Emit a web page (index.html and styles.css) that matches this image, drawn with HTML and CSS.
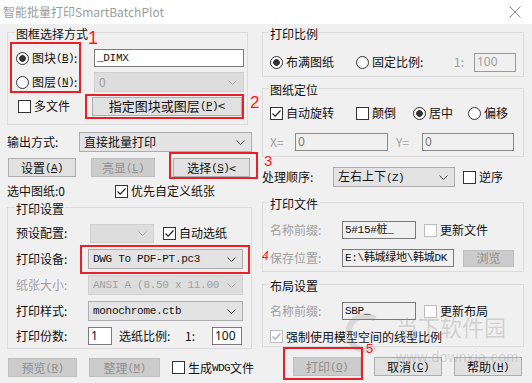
FILE: index.html
```html
<!DOCTYPE html>
<html lang="zh-CN">
<head>
<meta charset="utf-8">
<title>智能批量打印SmartBatchPlot</title>
<link rel="stylesheet" href="styles.css">
</head>
<body>
<div class="win">
  <div class="title">
    <span>智能批量打印SmartBatchPlot</span>
    <svg class="close" width="12" height="12" viewBox="0 0 12 12"><path d="M0.5 0.5L11.5 11.5M11.5 0.5L0.5 11.5" stroke="#8a8a8a" stroke-width="1" fill="none"/></svg>
  </div>
  <div class="body">
    <div class="col-l">
      <section class="grp g1">
        <div class="gh"><span>图框选择方式</span></div>
        <div class="gb">
          <div class="row h24">
            <span class="lbl w78"><span class="rb on"></span>图块<span class="k">(<u>B</u>)</span>:</span>
            <span class="edit mono w150">_DIMX</span>
          </div>
          <div class="row h24">
            <span class="lbl w78"><span class="rb"></span>图层<span class="k">(<u>N</u>)</span>:</span>
            <span class="sel dis w150"><span>0</span><svg class="chev" width="9" height="5" viewBox="0 0 9 5"><polyline points="0.5,0.5 4.5,4.5 8.5,0.5" fill="none" stroke="currentColor"/></svg></span>
          </div>
          <div class="row h24">
            <span class="lbl w74 ml2"><span class="cb"></span>多文件</span>
            <span class="btn w150 big">指定图块或图层<span class="k">(<u>P</u>)</span>&lt;</span>
          </div>
        </div>
      </section>

      <div class="row h20 mt7">
        <span class="lbl w72">输出方式:</span>
        <span class="sel w173"><span>直接批量打印</span><svg class="chev" width="9" height="5" viewBox="0 0 9 5"><polyline points="0.5,0.5 4.5,4.5 8.5,0.5" fill="none" stroke="currentColor"/></svg></span>
      </div>

      <div class="row h19 mt6">
        <span class="btn w68 ml1">设置<span class="k">(<u>A</u>)</span></span>
        <span class="btn dis w64 ml15">亮显<span class="k">(<u>L</u>)</span></span>
        <span class="btn w77 ml18">选择<span class="k">(<u>S</u>)</span>&lt;</span>
      </div>

      <div class="row h16 mt6">
        <span class="lbl w108">选中图纸:0</span>
        <span class="lbl"><span class="cb"><svg width="11" height="11" viewBox="0 0 11 11"><path d="M1.5 5.5L4.2 8.2L9.5 2.5" fill="none" stroke="#222" stroke-width="1.2"/></svg></span>优先自定义纸张</span>
      </div>

      <section class="grp g2">
        <div class="gh"><span>打印设置</span></div>
        <div class="gb">
          <div class="row h26">
            <span class="lbl w74">预设配置:</span>
            <span class="sel dis w64 h19"><span></span><svg class="chev" width="9" height="5" viewBox="0 0 9 5"><polyline points="0.5,0.5 4.5,4.5 8.5,0.5" fill="none" stroke="currentColor"/></svg></span>
            <span class="lbl ml9"><span class="cb"><svg width="11" height="11" viewBox="0 0 11 11"><path d="M1.5 5.5L4.2 8.2L9.5 2.5" fill="none" stroke="#222" stroke-width="1.2"/></svg></span>自动选纸</span>
          </div>
          <div class="row h26">
            <span class="lbl w72">打印设备:</span>
            <span class="sel mono w155"><span>DWG To PDF-PT.pc3</span><svg class="chev" width="9" height="5" viewBox="0 0 9 5"><polyline points="0.5,0.5 4.5,4.5 8.5,0.5" fill="none" stroke="currentColor"/></svg></span>
          </div>
          <div class="row h26">
            <span class="lbl w72 gray">纸张大小:</span>
            <span class="sel dis mono w155"><span class="clip">ANSI A (8.50 x 11.00 英</span><svg class="chev" width="9" height="5" viewBox="0 0 9 5"><polyline points="0.5,0.5 4.5,4.5 8.5,0.5" fill="none" stroke="currentColor"/></svg></span>
          </div>
          <div class="row h26">
            <span class="lbl w72">打印样式:</span>
            <span class="sel mono w155"><span>monochrome.ctb</span><svg class="chev" width="9" height="5" viewBox="0 0 9 5"><polyline points="0.5,0.5 4.5,4.5 8.5,0.5" fill="none" stroke="currentColor"/></svg></span>
          </div>
          <div class="row h24">
            <span class="lbl w72">打印份数:</span>
            <span class="edit w24">1</span>
            <span class="lbl w66 ml7">选纸比例:</span>
            <span class="lbl w27">1:</span>
            <span class="edit w30">100</span>
          </div>
        </div>
      </section>

      <div class="row h19 mt9">
        <span class="btn dis w69 ml1">预览<span class="k">(<u>R</u>)</span></span>
        <span class="btn dis w71 ml12">整理<span class="k">(<u>M</u>)</span></span>
        <span class="lbl ml12"><span class="cb"></span>生成<span class="k">WDG</span>文件</span>
      </div>
    </div>

    <div class="col-r">
      <section class="grp r1">
        <div class="gh"><span>打印比例</span></div>
        <div class="gb">
          <div class="row h24">
            <span class="lbl w86"><span class="rb on"></span>布满图纸</span>
            <span class="lbl w98"><span class="rb"></span>固定比例:</span>
            <span class="lbl w20 gray">1:</span>
            <span class="edit dis w42 h19">100</span>
          </div>
        </div>
      </section>

      <section class="grp r2">
        <div class="gh"><span>图纸定位</span></div>
        <div class="gb">
          <div class="row h24">
            <span class="lbl w86"><span class="cb"><svg width="11" height="11" viewBox="0 0 11 11"><path d="M1.5 5.5L4.2 8.2L9.5 2.5" fill="none" stroke="#222" stroke-width="1.2"/></svg></span>自动旋转</span>
            <span class="lbl w57"><span class="cb"></span>颠倒</span>
            <span class="lbl w55"><span class="rb on"></span>居中</span>
            <span class="lbl"><span class="rb"></span>偏移</span>
          </div>
          <div class="row h28 mt3">
            <span class="lbl w25 gray">X=</span>
            <span class="edit dis2 w93">0</span>
            <span class="lbl w26 ml8 gray">Y=</span>
            <span class="edit dis2 w92">0</span>
          </div>
        </div>
      </section>

      <div class="row h22 mt9">
        <span class="lbl w71">处理顺序:</span>
        <span class="sel w122"><span>左右上下<span class="k">(Z)</span></span><svg class="chev" width="9" height="5" viewBox="0 0 9 5"><polyline points="0.5,0.5 4.5,4.5 8.5,0.5" fill="none" stroke="currentColor"/></svg></span>
        <span class="lbl ml8"><span class="cb"></span>逆序</span>
      </div>

      <section class="grp r3">
        <div class="gh"><span>打印文件</span></div>
        <div class="gb">
          <div class="row h24">
            <span class="lbl w72 gray">名称前缀:</span>
            <span class="edit ro mono w74">5#15#桩_</span>
            <span class="lbl ml8"><span class="cb dis"></span>更新文件</span>
          </div>
          <div class="row h24 mt4">
            <span class="lbl w72 gray">保存位置:</span>
            <span class="edit ro mono w112">E:\韩城绿地\韩城DK</span>
            <span class="btn dis w51 h17 ml9">浏览</span>
          </div>
        </div>
      </section>

      <section class="grp r4">
        <div class="gh"><span>布局设置</span></div>
        <div class="gb">
          <div class="row h22">
            <span class="lbl w72 gray">名称前缀:</span>
            <span class="edit ro mono w74">SBP_</span>
            <span class="lbl ml8"><span class="cb dis"></span>更新布局</span>
          </div>
          <div class="row h19 mt5">
            <span class="lbl"><span class="cb dis"><svg width="11" height="11" viewBox="0 0 11 11"><path d="M1.5 5.5L4.2 8.2L9.5 2.5" fill="none" stroke="#a8a8a8" stroke-width="1.2"/></svg></span>强制使用模型空间的线型比例</span>
          </div>
        </div>
      </section>

      <div class="row h19 mt10">
        <span class="btn dis w68 ml31">打印<span class="k">(<u>O</u>)</span></span>
        <span class="btn w68 ml13">取消<span class="k">(<u>C</u>)</span></span>
        <span class="btn w68 ml12">帮助<span class="k">(<u>H</u>)</span></span>
      </div>
    </div>
  </div>

  <div class="wm wm1">当下软件园</div>
  <div class="wm wm2">www.downxia.com</div>
  <svg class="wm wmlogo" width="36" height="44" viewBox="0 0 36 44"><path d="M30 8A17 17 0 1 0 30 36" fill="none" stroke="rgba(130,130,130,0.22)" stroke-width="6"/></svg>

  <div class="mark b1"></div><span class="num n1">1</span>
  <div class="mark b2"></div><span class="num n2">2</span>
  <div class="mark b3"></div><span class="num n3">3</span>
  <div class="mark b4"></div><span class="num n4">4</span>
  <div class="mark b5"></div><span class="num n5">5</span>
</div>
</body>
</html>
```

FILE: styles.css
```css
* { box-sizing: border-box; }
html, body { margin: 0; padding: 0; }
body {
  width: 532px;
  height: 383px;
  overflow: hidden;
  background: #f0f0f0;
  font-family: "Noto Sans CJK SC", "Microsoft YaHei", sans-serif;
  font-size: 12px;
  line-height: 14px;
  color: #111;
}
.win { position: relative; width: 532px; height: 383px; }

.title {
  height: 24px;
  background: #fff;
  display: flex;
  align-items: center;
  justify-content: space-between;
  padding: 0 11px 0 3px;
  color: #9c9c9c;
  font-size: 12px;
}
.close { display: block; }

.body { display: flex; padding-left: 7px; gap: 10px; }
.col-l { width: 245px; display: flex; flex-direction: column; }
.col-r { width: 262px; display: flex; flex-direction: column; }

/* group box: header line with caption, then bordered body */
.grp { display: flex; flex-direction: column; flex: none; }
.gh { display: flex; align-items: flex-end; height: 13px; }
.gh::before {
  content: "";
  flex: none;
  width: 7px;
  height: 7px;
  border-top: 1px solid #dcdcdc;
  border-left: 1px solid #dcdcdc;
}
.gh span { line-height: 13px; padding: 0 1px; align-self: stretch; white-space: nowrap; color: #111; }
.gh::after {
  content: "";
  flex: 1;
  height: 7px;
  border-top: 1px solid #dcdcdc;
  border-right: 1px solid #dcdcdc;
}
.gb { border: 1px solid #dcdcdc; border-top: none; }

.g1 { width: 241px; margin-top: 3px; }
.g1 .gb { padding: 6px 0 6px 8px; }
.g1 .gh::before { width: 7px; }
.g2 { width: 245px; margin-top: 3px; }
.g2 .gb { padding: 5px 0 0 8px; }
.r1 { width: 262px; margin-top: 3px; }
.r1 .gb { padding: 10px 0 2px 7px; }
.r2 { width: 262px; margin-top: 6px; }
.r2 .gb { padding: 5px 0 0 7px; }
.r3 { width: 262px; margin-top: 9px; }
.r3 .gb { padding: 8px 0 1px 7px; }
.r4 { width: 262px; margin-top: 7px; }
.r4 .gb { padding: 8px 0 0 7px; }
.r1 .gh::before, .r2 .gh::before, .r3 .gh::before, .r4 .gh::before { width: 6px; }

.row { display: flex; align-items: center; flex: none; }
.h16 { height: 16px; } .h17 { height: 17px; } .h19 { height: 19px; } .h20 { height: 20px; }
.h22 { height: 22px; } .h24 { height: 24px; } .h26 { height: 26px; } .h28 { height: 28px; }
.mt3 { margin-top: 3px; } .mt4 { margin-top: 4px; } .mt5 { margin-top: 5px; } .mt6 { margin-top: 6px; }
.mt7 { margin-top: 7px; } .mt9 { margin-top: 9px; } .mt10 { margin-top: 10px; }
.ml1 { margin-left: 1px; } .ml2 { margin-left: 2px; } .ml7 { margin-left: 7px; } .ml8 { margin-left: 8px; }
.ml9 { margin-left: 9px; } .ml12 { margin-left: 12px; } .ml13 { margin-left: 13px; } .ml15 { margin-left: 15px; }
.ml18 { margin-left: 18px; } .ml31 { margin-left: 31px; }

.w20 { width: 20px; } .w24 { width: 24px; } .w25 { width: 25px; } .w26 { width: 26px; } .w27 { width: 27px; }
.w30 { width: 30px; } .w42 { width: 42px; } .w51 { width: 51px; } .w55 { width: 55px; } .w57 { width: 57px; }
.w64 { width: 64px; } .w66 { width: 66px; } .w68 { width: 68px; } .w69 { width: 69px; } .w71 { width: 71px; }
.w72 { width: 72px; } .w74 { width: 74px; } .w77 { width: 77px; } .w78 { width: 78px; } .w86 { width: 86px; }
.w92 { width: 92px; } .w93 { width: 93px; } .w98 { width: 98px; } .w108 { width: 108px; } .w112 { width: 112px; }
.w122 { width: 122px; } .w150 { width: 150px; } .w155 { width: 155px; } .w173 { width: 173px; }

.lbl { display: flex; align-items: center; flex: none; white-space: nowrap; }
.gray { color: #a0a0a0; }

.k {
  font-family: "Liberation Mono", monospace;
  font-size: 11px;
  letter-spacing: -0.6px;
}
.k u { text-underline-offset: 1px; }

.rb {
  width: 13px; height: 13px;
  border: 1px solid #333;
  border-radius: 50%;
  background: #fff;
  flex: none;
  margin-right: 3px;
}
.rb.on { background: radial-gradient(circle, #333 0 3px, #fff 3.7px); }
.cb {
  width: 13px; height: 13px;
  border: 1px solid #333;
  background: #fff;
  flex: none;
  margin-right: 3px;
  display: flex;
  align-items: center;
  justify-content: center;
}
.cb svg { display: block; }
.cb.dis { border-color: #bcbcbc; }

.edit {
  height: 18px;
  border: 1px solid #7a7a7a;
  background: #fff;
  padding: 0 2px;
  display: flex;
  align-items: center;
  flex: none;
  white-space: nowrap;
  overflow: hidden;
  font-family: "Noto Sans", "Noto Sans CJK SC", sans-serif;
  font-size: 12px;
}
.edit.h19 { height: 19px; }
.edit.ro { background: #f0f0f0; }
.edit.dis { background: #f0f0f0; border-color: #9a9a9a; color: #a0a0a0; }
.edit.dis2 { background: #f0f0f0; border-color: #8a8a8a; color: #7a7a7a; }
.mono {
  font-family: "Liberation Mono", "Noto Sans CJK SC", monospace;
  font-size: 11px;
  letter-spacing: -0.3px;
}

.sel {
  height: 20px;
  border: 1px solid #adadad;
  background: #e3e3e3;
  display: flex;
  align-items: center;
  justify-content: space-between;
  padding: 0 6px 0 4px;
  flex: none;
  white-space: nowrap;
  overflow: hidden;
  color: #111;
}
.sel.h19 { height: 19px; }
.sel.dis { background: #dddddd; border-color: #d0d0d0; color: #a0a0a0; }
.sel .chev { flex: none; color: #444; margin-left: 4px; }
.sel.dis .chev { color: #a8a8a8; }
.clip { overflow: hidden; }

.btn {
  height: 19px;
  border: 1px solid #adadad;
  background: #e1e1e1;
  display: flex;
  align-items: center;
  justify-content: center;
  flex: none;
  white-space: nowrap;
}
.btn.h17 { height: 17px; }
.btn.big { font-size: 13px; }
.btn.dis { background: #cccccc; border-color: #bfbfbf; color: #8f8f8f; }

.mark { position: absolute; border: 2px solid #e8202a; }
.b1 { left: 10px; top: 42px; width: 71px; height: 51px; }
.b2 { left: 85px; top: 94px; width: 159px; height: 25px; }
.b3 { left: 169px; top: 152px; width: 89px; height: 27px; }
.b4 { left: 80px; top: 245px; width: 170px; height: 29px; }
.b5 { left: 283px; top: 347px; width: 80px; height: 33px; }

.num {
  position: absolute;
  color: #ff1a1a;
  font-family: "Liberation Sans", sans-serif;
  line-height: 1;
}
.n1 { left: 88px; top: 29px; font-size: 18px; }
.n2 { left: 250px; top: 94px; font-size: 17px; }
.n3 { left: 264px; top: 153px; font-size: 15px; }
.n4 { left: 262px; top: 250px; font-size: 12px; font-style: italic; }
.n5 { left: 366px; top: 342px; font-size: 13px; }

.wm { position: absolute; color: rgba(140, 140, 140, 0.32); pointer-events: none; white-space: nowrap; }
.wm1 { left: 396px; top: 313px; font-size: 22px; line-height: 26px; letter-spacing: 0; }
.wm2 { left: 396px; top: 349px; font-size: 14px; line-height: 16px; font-family: "Liberation Sans", sans-serif; letter-spacing: 0.5px; }
.wmlogo { left: 345px; top: 311px; }
```
